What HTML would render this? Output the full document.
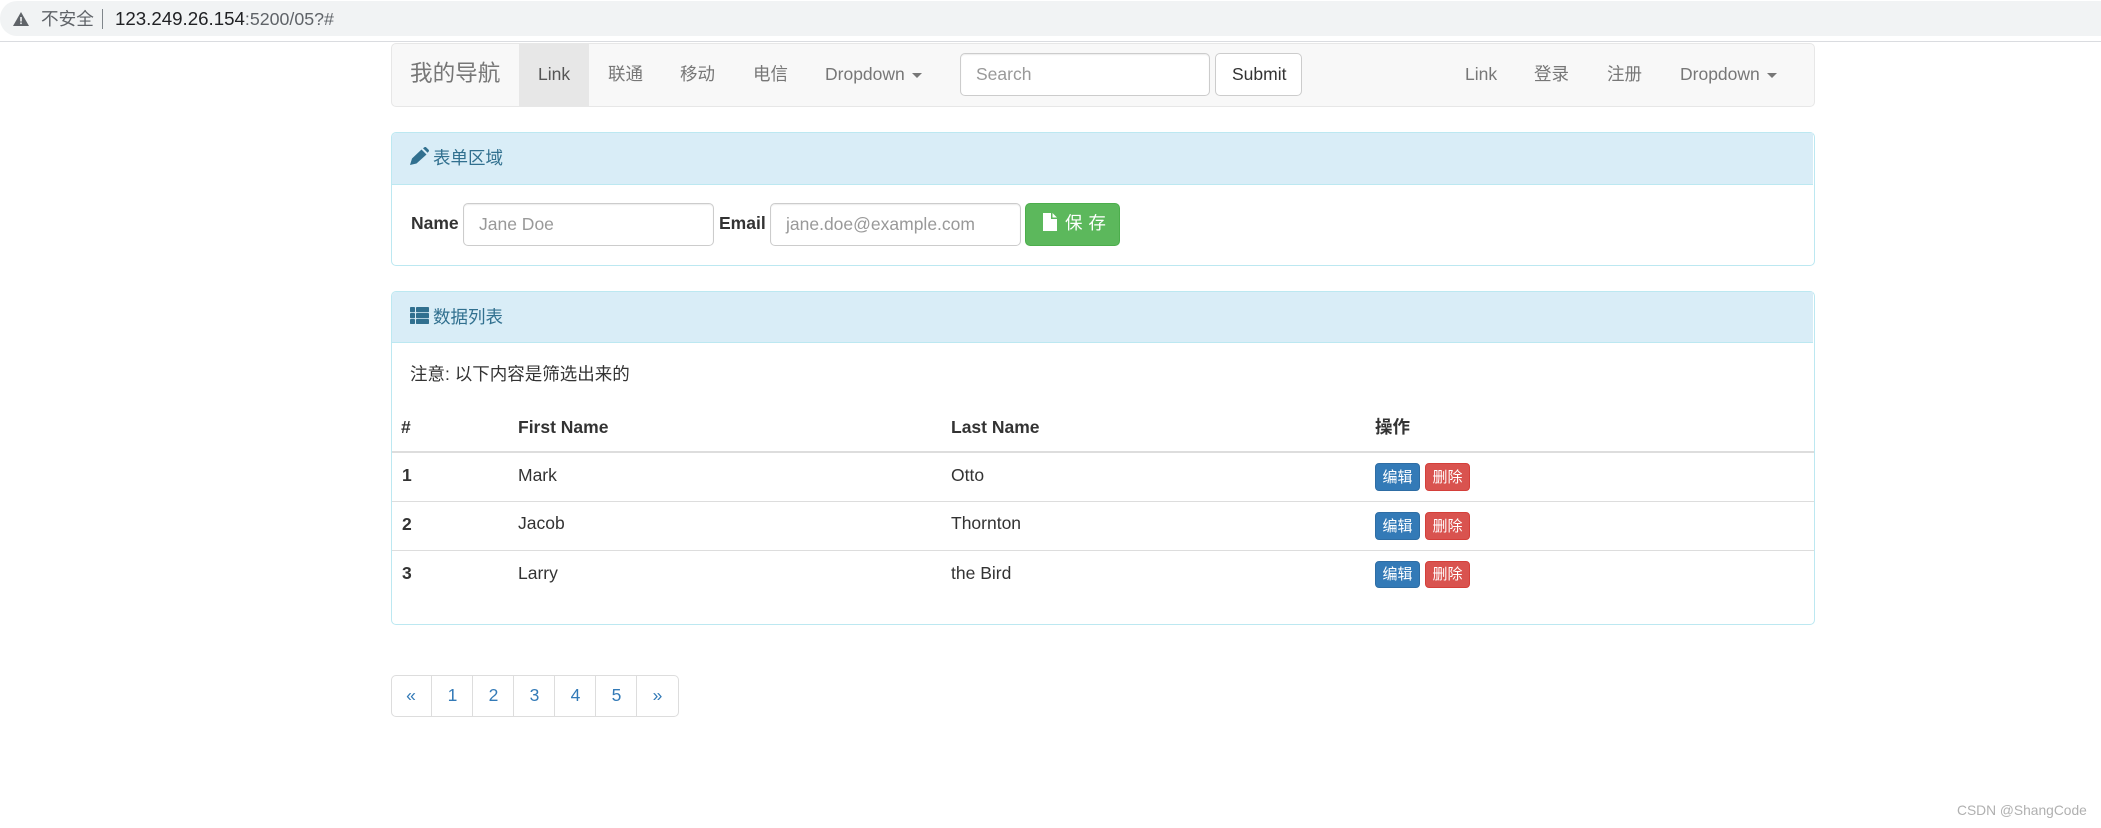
<!DOCTYPE html>
<html lang="zh"><head><meta charset="utf-8"><title>Bootstrap</title>
<style>
html,body{margin:0;padding:0;background:#fff;width:2101px;height:828px;overflow:hidden}
body{position:relative;font-family:"Liberation Sans","Noto Sans CJK SC",sans-serif;font-size:17.5px;color:#333}
.b,.t,svg{position:absolute;box-sizing:border-box}
.t{white-space:nowrap;line-height:24px;height:24px}
.n{color:#777}
.i{background:#fff;border:1px solid #ccc;border-radius:5px;box-shadow:inset 0 1px 1px rgba(0,0,0,.075)}
.p{color:#999}
.w{font-weight:700}
.h{color:#31708f}
.l{background:#ddd;height:1px;left:392px;width:1422px}
.car{position:absolute;width:0;height:0;border-top:5px solid #777;border-left:5px solid transparent;border-right:5px solid transparent}
.panel{border:1px solid #bce8f1;border-radius:5px;left:391px;width:1424px;background:#fff}
.head{background:#d9edf7;left:392px;width:1421px;border-bottom:1px solid #bce8f1;border-radius:4px 0 0 0}
.be,.bd{width:45px;height:28px;border-radius:4px;color:#fff;font-size:15px;line-height:27px;text-align:center}
.be{background:#337ab7;border:1px solid #2e6da4;left:1375px}
.bd{background:#d9534f;border:1px solid #d43f3a;left:1425px}
.pg{color:#337ab7;text-align:center;top:683px}
.d{background:#ddd;width:1px;top:676px;height:40px}
</style></head><body>

<!-- browser address bar -->
<div class="b" style="left:0;top:1px;width:2101px;height:35px;background:#f1f3f4;border-radius:17px 0 0 17px"></div>
<div class="b" style="left:0;top:41px;width:2101px;height:1px;background:#dadce0"></div>
<svg style="left:13px;top:12px" width="16" height="14" viewBox="0 0 16 14"><path d="M8 0L16 14H0Z" fill="#5f6368"/><rect x="7.2" y="5" width="1.6" height="4.5" fill="#f1f3f4"/><rect x="7.2" y="10.5" width="1.6" height="1.6" fill="#f1f3f4"/></svg>
<div class="t" style="left:41px;top:7px;color:#5f6368;font-size:17.6px">不安全</div>
<div class="b" style="left:102px;top:9px;width:1px;height:20px;background:#80868b"></div>
<div class="t" style="left:115px;top:7px;font-size:18.7px;color:#202124">123.249.26.154<span style="color:#5f6368;font-size:17.8px">:5200/05?#</span></div>

<!-- navbar -->
<div class="b" style="left:391px;top:43px;width:1424px;height:64px;background:#f8f8f8;border:1px solid #e7e7e7;border-radius:5px"></div>
<div class="b" style="left:519px;top:43px;width:70px;height:63px;background:#e7e7e7"></div>
<div class="t n" style="left:410px;top:62px;font-size:22.6px">我的导航</div>
<div class="t" style="left:538px;top:62px;color:#555">Link</div>
<div class="t n" style="left:608px;top:62px">联通</div>
<div class="t n" style="left:680px;top:62px">移动</div>
<div class="t n" style="left:753px;top:62px">电信</div>
<div class="t n" style="left:825px;top:62px">Dropdown</div>
<div class="car" style="left:912px;top:73px"></div>
<div class="b i" style="left:960px;top:53px;width:250px;height:43px"></div>
<div class="t p" style="left:976px;top:62px">Search</div>
<div class="b" style="left:1215px;top:53px;width:87px;height:43px;background:#fff;border:1px solid #ccc;border-radius:5px"></div>
<div class="t" style="left:1232px;top:62px">Submit</div>
<div class="t n" style="left:1465px;top:62px">Link</div>
<div class="t n" style="left:1534px;top:62px">登录</div>
<div class="t n" style="left:1607px;top:62px">注册</div>
<div class="t n" style="left:1680px;top:62px">Dropdown</div>
<div class="car" style="left:1767px;top:73px"></div>

<!-- panel 1 -->
<div class="b panel" style="top:132px;height:134px"></div>
<div class="b head" style="top:133px;height:52px"></div>
<svg style="left:410px;top:147px" width="19" height="18" viewBox="0 0 19 18"><path fill="#31708f" d="M11.5 2.5L16.5 7.5L6.5 16.5L0 18L2 11.5ZM13 1.2L14.4.2C15-.2 15.7-.1 16.2.4L18.6 2.8C19.1 3.3 19.1 4 18.7 4.5L17.6 5.8Z"/></svg>
<div class="t h" style="left:433px;top:146px">表单区域</div>
<div class="t w" style="left:411px;top:211px">Name</div>
<div class="b i" style="left:463px;top:203px;width:251px;height:43px"></div>
<div class="t p" style="left:479px;top:212px">Jane Doe</div>
<div class="t w" style="left:719px;top:211px">Email</div>
<div class="b i" style="left:770px;top:203px;width:251px;height:43px"></div>
<div class="t p" style="left:786px;top:212px">jane.doe@example.com</div>
<div class="b" style="left:1025px;top:203px;width:95px;height:43px;background:#5cb85c;border:1px solid #4cae4c;border-radius:5px"></div>
<svg style="left:1043px;top:213px" width="14" height="18" viewBox="0 0 14 18"><path fill="#fff" d="M0 0H8V6H14V18H0ZM9.5 0L14 4.5H9.5Z"/></svg>
<div class="t" style="left:1065px;top:211px;color:#fff;word-spacing:1px">保 存</div>

<!-- panel 2 -->
<div class="b panel" style="top:291px;height:334px"></div>
<div class="b head" style="top:292px;height:51px"></div>
<svg style="left:410px;top:307px" width="19" height="17" viewBox="0 0 19 17" fill="#31708f"><rect width="5" height="5.2" rx=".8"/><rect x="6" width="13" height="5.2" rx=".8"/><rect y="6" width="5" height="5.2" rx=".8"/><rect x="6" y="6" width="13" height="5.2" rx=".8"/><rect y="12" width="5" height="5" rx=".8"/><rect x="6" y="12" width="13" height="5" rx=".8"/></svg>
<div class="t h" style="left:433px;top:305px">数据列表</div>
<div class="t" style="left:410px;top:362px">注意: 以下内容是筛选出来的</div>

<div class="t w" style="left:401px;top:415px">#</div>
<div class="t w" style="left:518px;top:415px">First Name</div>
<div class="t w" style="left:951px;top:415px">Last Name</div>
<div class="t w" style="left:1375px;top:415px">操作</div>
<div class="b l" style="top:451px;height:2px"></div>

<div class="t w" style="left:402px;top:463px">1</div>
<div class="t" style="left:518px;top:463px">Mark</div>
<div class="t" style="left:951px;top:463px">Otto</div>
<div class="b be" style="top:463px">编辑</div><div class="b bd" style="top:463px">删除</div>
<div class="b l" style="top:501px"></div>

<div class="t w" style="left:402px;top:512px">2</div>
<div class="t" style="left:518px;top:511px">Jacob</div>
<div class="t" style="left:951px;top:511px">Thornton</div>
<div class="b be" style="top:512px">编辑</div><div class="b bd" style="top:512px">删除</div>
<div class="b l" style="top:550px"></div>

<div class="t w" style="left:402px;top:561px">3</div>
<div class="t" style="left:518px;top:561px">Larry</div>
<div class="t" style="left:951px;top:561px">the Bird</div>
<div class="b be" style="top:561px;height:27px;line-height:26px">编辑</div><div class="b bd" style="top:561px;height:27px;line-height:26px">删除</div>

<!-- pagination -->
<div class="b" style="left:391px;top:675px;width:288px;height:42px;border:1px solid #ddd;border-radius:5px"></div>
<div class="b d" style="left:431px"></div><div class="b d" style="left:472px"></div><div class="b d" style="left:513px"></div><div class="b d" style="left:554px"></div><div class="b d" style="left:595px"></div><div class="b d" style="left:636px"></div>
<div class="t pg" style="left:391px;width:40px">«</div>
<div class="t pg" style="left:432px;width:41px">1</div>
<div class="t pg" style="left:473px;width:41px">2</div>
<div class="t pg" style="left:514px;width:41px">3</div>
<div class="t pg" style="left:555px;width:41px">4</div>
<div class="t pg" style="left:596px;width:41px">5</div>
<div class="t pg" style="left:637px;width:41px">»</div>

<div class="t" style="left:1957px;top:799px;font-size:13.8px;color:#b0b0b0">CSDN @ShangCode</div>
</body></html>
